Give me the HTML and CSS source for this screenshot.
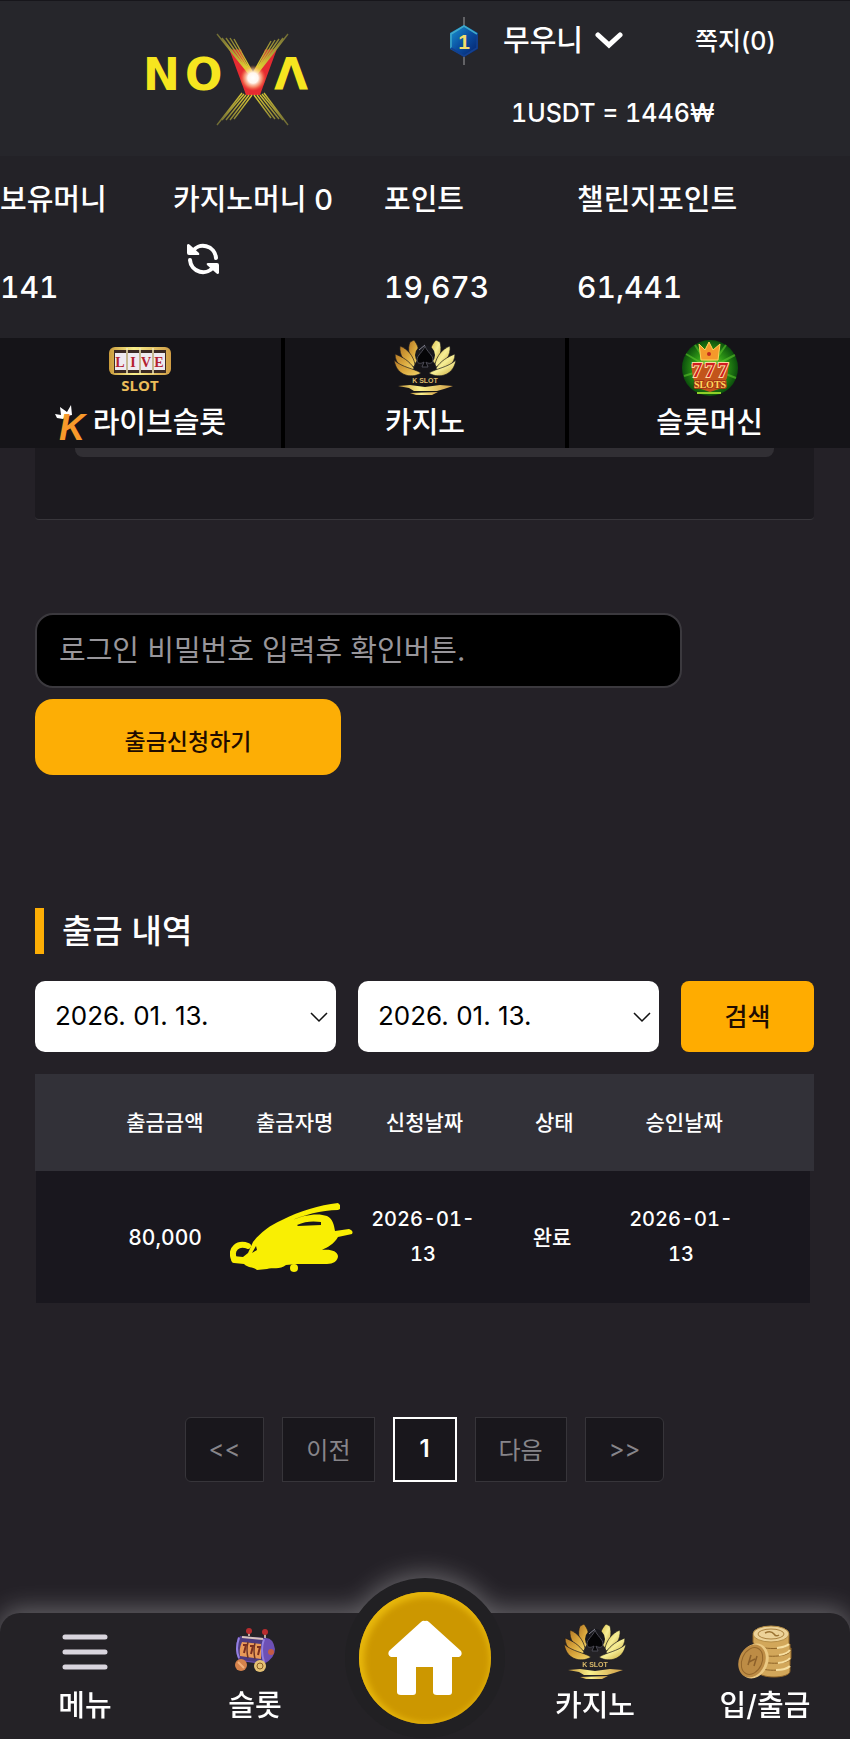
FILE: index.html
```html
<!DOCTYPE html>
<html lang="ko">
  <head>
    <meta charset="utf-8">
    <meta name="viewport" content="width=device-width, initial-scale=1">
    <title>출금 내역</title>
    <link rel="stylesheet" href="styles.css">
  </head>
  <body>
    <!-- 공용 그라디언트 / 심볼 -->
    <svg class="defs" width="0" height="0" aria-hidden="true">
      <defs>
        <linearGradient id="gold" x1="0" y1="0" x2="1" y2="1">
          <stop offset="0" stop-color="#b57a26"/>
          <stop offset=".5" stop-color="#d9a63c"/>
          <stop offset="1" stop-color="#f3d86c"/>
        </linearGradient>
        <linearGradient id="goldLight" x1="0" y1="0" x2="1" y2="1">
          <stop offset="0" stop-color="#d8b93f"/>
          <stop offset=".5" stop-color="#f6ee96"/>
          <stop offset="1" stop-color="#c3a02f"/>
        </linearGradient>
        <linearGradient id="goldBar" x1="0" y1="0" x2="1" y2="0">
          <stop offset="0" stop-color="#c99a3a"/>
          <stop offset=".4" stop-color="#f9f08c"/>
          <stop offset="1" stop-color="#d09d45"/>
        </linearGradient>
        <symbol id="lotus" viewBox="0 0 62 56">
          <g fill="url(#gold)" stroke="#1b1a1e" stroke-width=".7">
            <path d="M16 2 20 0C24 5 26 11 24 19L21 24C15 18 13 9 16 2Z"/>
            <path d="M6 6C14 9 19 16 21 24L20 27C10 23 5 15 6 6Z"/>
            <path d="M1 14C9 17 15 21 20 28L19 30C9 30 1 24 1 14Z"/>
            <path d="M0 20C9 28 19 28 27 33C20 38 3 38 0 20Z"/>
          </g>
          <g fill="url(#goldLight)" stroke="#1b1a1e" stroke-width=".7">
            <path d="M46 2 42 0C37 5 35 11 37 19L41 24C47 18 48 9 46 2Z"/>
            <path d="M56 6C48 9 43 16 41 24L42 27C52 23 57 15 56 6Z"/>
            <path d="M61 14C53 17 47 21 42 28L43 30C53 30 61 24 61 14Z"/>
            <path d="M62 20C53 28 43 28 35 33C42 38 59 38 62 20Z"/>
          </g>
          <circle cx="31" cy="15" r="10" fill="#17171c"/>
          <path d="M31 6C33 12 39 15 39 20C39 24 34 24 32 22L34 27H28L30 22C27 24 23 24 23 20C23 15 29 12 31 6Z" fill="#050507" stroke="#4b4a54"/>
          <path d="M25 10 31 5" stroke="#858592"/>
          <text class="lotus-text" x="31" y="43" text-anchor="middle">K SLOT</text>
          <path d="M4 46 16 45 31 47 46 45 59 46 50 49 43 51H20L15 48Z" fill="url(#goldBar)"/>
          <path d="M16 53 44 52 38 55H22Z" fill="url(#goldBar)"/>
        </symbol>
      </defs>
    </svg>

    <header class="top">
      <a class="logo" href="#" aria-label="NOVA">
        <svg width="180" height="94" viewBox="-4 0 180 94">
          <defs>
            <radialGradient id="flare">
              <stop offset="0" stop-color="#fff"/>
              <stop offset=".4" stop-color="#fff6ee"/>
              <stop offset=".7" stop-color="#ffc890" stop-opacity=".6"/>
              <stop offset="1" stop-color="#ff7b3a" stop-opacity="0"/>
            </radialGradient>
            <radialGradient id="ray" gradientUnits="userSpaceOnUse" cx="107" cy="46" r="56">
              <stop offset="0" stop-color="#ffe92e"/>
              <stop offset=".5" stop-color="#b9ac35"/>
              <stop offset="1" stop-color="#6f6c35"/>
            </radialGradient>
          </defs>
          <text class="logo-text" x="-3" y="57">N</text>
          <text class="logo-text" x="39" y="57">O</text>
          <text class="logo-text" x="128" y="57">Λ</text>
          <text class="logo-v" x="107" y="62" text-anchor="middle">V</text>
          <g stroke="url(#ray)" stroke-width="1.4">
            <path d="M71 1 104 42M76 5 105 42M80 5 106 42M84 5 107 42M88 6 108 42"/>
            <path d="M142 1 110 42M137 5 109 42M133 6 108 42M129 7 107 42M125 8 106 42"/>
            <path d="M71 92 96 60M76 87 98 61M80 87 100 62M84 87 103 62M88 86 106 62"/>
            <path d="M142 92 118 60M137 87 116 61M133 86 114 62M129 86 111 62M125 85 108 62"/>
          </g>
          <circle cx="107" cy="45" r="13" fill="url(#flare)"/>
        </svg>
      </a>
      <div class="account">
        <div class="account-row">
          <svg width="30" height="48" viewBox="0 0 30 48" aria-hidden="true">
            <defs>
              <linearGradient id="badge" x1="0" y1="0" x2="1" y2="1">
                <stop offset="0" stop-color="#1a9bd3"/>
                <stop offset=".5" stop-color="#0a4da0"/>
                <stop offset="1" stop-color="#051e66"/>
              </linearGradient>
            </defs>
            <path d="M15 0V48" stroke="#77777b" stroke-width="1.5"/>
            <path d="M15 8 29 16V32L15 40 1 32V16Z" fill="url(#badge)"/>
            <path d="M2 31V17L15 9 28 17" fill="none" stroke="#3fa9c9" stroke-width="1.5"/>
            <path d="M2 31 15 39 28 31V18" fill="none" stroke="#14408f" stroke-width="1.5"/>
            <text class="badge-text" x="15" y="32" text-anchor="middle">1</text>
          </svg>
          <button class="user" type="button">
            무우니
            <svg width="28" height="18" viewBox="0 0 28 18" aria-hidden="true">
              <path d="M3 3 14 13 25 3" fill="none" stroke="#fff" stroke-width="5" stroke-linecap="round"/>
            </svg>
          </button>
          <a class="memo" href="#">쪽지(0)</a>
        </div>
        <p class="rate">1USDT = 1446₩</p>
      </div>
    </header>

    <section class="money">
      <div class="money-item">
        <span class="money-label">보유머니</span>
        <span class="money-value">141</span>
      </div>
      <div class="money-item">
        <span class="money-label">카지노머니 0</span>
        <button class="refresh" type="button" aria-label="새로고침">
          <svg width="32" height="32" viewBox="0 0 32 32">
            <path d="M5 9A13 13 0 0 1 29 15" fill="none" stroke="#fff" stroke-width="4" stroke-linecap="round"/>
            <path d="M27 23A13 13 0 0 1 3 17" fill="none" stroke="#fff" stroke-width="4" stroke-linecap="round"/>
            <path d="M0 2Q1 0 3 2L12 10Q13 12 11 12H2Q0 12 0 10Z" fill="#fff"/>
            <path d="M32 30Q31 32 29 30L20 22Q19 20 21 20H30Q32 20 32 22Z" fill="#fff"/>
          </svg>
        </button>
      </div>
      <div class="money-item">
        <span class="money-label">포인트</span>
        <span class="money-value">19,673</span>
      </div>
      <div class="money-item">
        <span class="money-label">챌린지포인트</span>
        <span class="money-value">61,441</span>
      </div>
    </section>

    <nav class="tabs">
      <a class="tab" href="#">
        <svg width="64" height="56" viewBox="0 0 64 56" aria-hidden="true">
          <rect x="1" y="7" width="62" height="28" rx="6" fill="url(#goldBar)"/>
          <rect x="6" y="10" width="52" height="23" fill="#3b2a24"/>
          <g fill="#eeeaf0">
            <rect x="7" y="13" width="11" height="17"/><rect x="20" y="13" width="11" height="17"/>
            <rect x="33" y="13" width="11" height="17"/><rect x="46" y="13" width="11" height="17"/>
          </g>
          <g class="reel-text" text-anchor="middle">
            <text x="12" y="27">L</text><text x="25" y="27">I</text>
            <text x="38" y="27">V</text><text x="51" y="27">E</text>
          </g>
          <path d="M19 8V34M32 8V34M45 8V34" stroke="#f5e9b5" stroke-width="1.5"/>
          <text class="slot-text" x="32" y="51" text-anchor="middle">SLOT</text>
        </svg>
        <span class="tab-label">
          <svg class="k-logo" width="34" height="36" viewBox="0 0 34 36" aria-hidden="true">
            <path d="M2 13 0 9 6 10 5 2 12 7 16 0 17 10 12 11 8 14Z" fill="#fff"/>
            <text class="k-text" x="4" y="35">K</text>
          </svg>
          라이브슬롯
        </span>
      </a>
      <a class="tab" href="#">
        <svg width="62" height="56" aria-hidden="true"><use href="#lotus"/></svg>
        <span class="tab-label">카지노</span>
      </a>
      <a class="tab" href="#">
        <svg width="56" height="56" viewBox="0 0 56 56" aria-hidden="true">
          <defs>
            <radialGradient id="green">
              <stop offset="0" stop-color="#b4e04a"/>
              <stop offset=".55" stop-color="#2f9a16"/>
              <stop offset="1" stop-color="#0b4f0c"/>
            </radialGradient>
          </defs>
          <circle cx="28" cy="28" r="28" fill="url(#green)"/>
          <path d="M28 28 4 14M28 28 13 5M28 28 44 5M28 28 53 15M28 28 2 36M28 28 54 38" stroke="#5cc62c" stroke-width="2" opacity=".6"/>
          <path d="M19 20 17 4 23 10 27 2 31 10 38 4 36 20Z" fill="#f4992b" stroke="#ffd35a"/>
          <circle cx="27" cy="14" r="2" fill="#c32a1e"/>
          <path d="M9 24H47L45 38 40 48 28 52 16 48 11 38Z" fill="#c2541a"/>
          <g class="seven-text" text-anchor="middle">
            <text x="15" y="37">7</text><text x="28" y="37">7</text><text x="41" y="37">7</text>
          </g>
          <text class="slots-text" x="28" y="48" text-anchor="middle">SLOTS</text>
          <path d="M15 53H39" stroke="#8ed029" stroke-width="2"/>
        </svg>
        <span class="tab-label">슬롯머신</span>
      </a>
    </nav>

    <main class="content">
      <div class="panel">
        <div class="panel-card"></div>
      </div>

      <form class="withdraw">
        <input class="password" type="password" placeholder="로그인 비밀번호 입력후 확인버튼." aria-label="로그인 비밀번호">
        <button class="submit" type="button">출금신청하기</button>
      </form>

      <h2 class="title">출금 내역</h2>

      <form class="search">
        <select class="date" aria-label="시작 날짜">
          <option>2026. 01. 13.</option>
        </select>
        <select class="date" aria-label="종료 날짜">
          <option>2026. 01. 13.</option>
        </select>
        <button class="search-btn" type="button">검색</button>
      </form>

      <table class="list">
        <thead>
          <tr>
            <th>출금금액</th>
            <th>출금자명</th>
            <th>신청날짜</th>
            <th>상태</th>
            <th>승인날짜</th>
          </tr>
        </thead>
        <tbody>
          <tr>
            <td>80,000</td>
            <td class="name">
              <svg width="123" height="69" viewBox="0 0 123 69" aria-hidden="true">
                <path d="M4 56C0 46 8 39 18 43" fill="none" stroke="#f9ef03" stroke-width="6" stroke-linecap="round"/>
                <path d="M3 53 13 54 18 50 23 39C29 31 40 22 52 17C70 8 89 2 108 0L110 2V6L108 7C91 7 74 12 60 18C75 11 89 10 97 13C103 16 104 22 105 28L119 26Q124 28 122 31L108 34C104 41 98 44 92 47C101 46 107 48 108 53C108 58 103 61 97 61H67L56 62C50 67 42 64 37 66L27 67C24 64 18 65 14 61L4 60C1 60 0 55 3 53Z" fill="#f9ef03"/>
                <path d="M7 51C8 46 11 44 17 46L12 52ZM22 50 26 43 27 47ZM67 22C75 18 84 18 91 19V22L68 23Z" fill="#19171e"/>
                <circle cx="64" cy="65" r="4" fill="#f9ef03"/>
              </svg>
            </td>
            <td class="day">2026-01-13</td>
            <td>완료</td>
            <td class="day">2026-01-13</td>
          </tr>
        </tbody>
      </table>

      <div class="paging">
        <button type="button">&lt;&lt;</button>
        <button type="button">이전</button>
        <button class="on" type="button">1</button>
        <button type="button">다음</button>
        <button type="button">&gt;&gt;</button>
      </div>
    </main>

    <nav class="bottom">
      <a class="bottom-item" href="#">
        <svg width="56" height="56" viewBox="0 0 56 56" aria-hidden="true">
          <path d="M8 13H48M8 28H48M8 43H48" stroke="#d9d5dd" stroke-width="5" stroke-linecap="round"/>
        </svg>
        <span>메뉴</span>
      </a>
      <a class="bottom-item" href="#">
        <svg width="56" height="56" viewBox="5 0 56 56" aria-hidden="true">
          <path d="M27 12V7M43 14V8" stroke="#b9a6a0" stroke-width="2"/>
          <circle cx="27" cy="7" r="3" fill="#b82d2f"/><circle cx="43" cy="8" r="3" fill="#b82d2f"/>
          <path d="M16 13Q12 25 17 37L42 40Q53 34 53 25Q51 13 43 14Z" fill="#6d50b5"/>
          <path d="M18 12 43 14Q39 18 40 26Q39 34 42 39L18 36Q13 24 18 12Z" fill="#4d3b7f"/>
          <path d="M20 18 39 20V35L18 32Q17 24 20 18Z" fill="#e99a58"/>
          <path d="M26 18Q24 25 26 34M33 19Q31 26 33 35" fill="none" stroke="#6c3427" stroke-width="1.5"/>
          <path d="M21 21H24L22 29M28 22H31L29 30M35 23H38L36 31" fill="none" stroke="#7a2f20" stroke-width="2"/>
          <path d="M20 13 41 15" stroke="#d8c3bd" stroke-width="2"/>
          <path d="M17 14Q13 25 17 34M42 15Q38 26 42 38" fill="none" stroke="#9380e0" stroke-width="2"/>
          <circle cx="49" cy="28" r="3" fill="#c35b45"/>
          <circle cx="19" cy="41" r="6" fill="#d5824b"/><circle cx="38" cy="42" r="6" fill="#e5c174"/>
          <circle cx="38" cy="42" r="3" fill="none" stroke="#8b5d24"/>
          <path d="M16 38 22 44" stroke="#f2b07a" stroke-width="2"/>
        </svg>
        <span>슬롯</span>
      </a>
      <a class="bottom-item home" href="#" aria-label="홈">
        <span class="home-ring">
          <span class="home-coin">
            <svg width="76" height="76" viewBox="0 0 76 76">
              <path d="M38 1Q40 0 42 2L74 31Q76 35 72 37H65V72Q65 75 62 75H50Q46 75 46 72V47H29V72Q29 75 26 75H14Q10 75 10 72V37H4Q0 35 2 31L34 2Q36 0 38 1Z" fill="#fff"/>
            </svg>
          </span>
        </span>
      </a>
      <a class="bottom-item" href="#">
        <svg width="62" height="56" aria-hidden="true"><use href="#lotus"/></svg>
        <span>카지노</span>
      </a>
      <a class="bottom-item" href="#">
        <svg width="56" height="56" viewBox="0 0 56 56" aria-hidden="true">
          <g fill="#d2a75a" stroke="#8e6428">
            <path d="M21 42V47C21 55 53 55 53 47V42Z"/>
            <path d="M20 36V41C21 48 52 48 53 41V35Z"/>
            <path d="M21 29V34C22 41 53 41 54 34V24Z"/>
            <path d="M18 21V27C19 34 52 34 53 27V20Z"/>
            <path d="M16 11V18C17 26 52 27 52 19V11Z"/>
          </g>
          <path d="M40 24Q49 23 52 20M42 31Q50 30 53 26M41 39Q50 38 53 34M39 46Q49 46 53 42" fill="none" stroke="#f7dfa0" stroke-width="2"/>
          <ellipse cx="34" cy="10" rx="18" ry="8" fill="#ecd298" stroke="#b58d45"/>
          <ellipse cx="34" cy="10" rx="13" ry="5" fill="none" stroke="#ab8340"/>
          <path d="M28 9Q34 6 37 10Q39 13 42 11" fill="none" stroke="#9c7433" stroke-width="1.5"/>
          <ellipse cx="17" cy="37" rx="14" ry="18" transform="rotate(24 17 37)" fill="#ebc983"/>
          <ellipse cx="15" cy="37" rx="13" ry="17" transform="rotate(24 15 37)" fill="#bd8c45"/>
          <ellipse cx="15" cy="37" rx="10" ry="14" transform="rotate(24 15 37)" fill="none" stroke="#94672c"/>
          <path d="M11 41 14 31M17 42 20 32M12 38 18 35" stroke="#8c602a" stroke-width="1.5"/>
        </svg>
        <span>입/출금</span>
      </a>
    </nav>
  </body>
</html>
```
FILE: styles.css
```css
*{
  box-sizing: border-box;
}
body{
  margin: 0;
  background: #242127;
  color: #fff;
  font-family: Inter, "Noto Sans CJK KR", sans-serif;
  font-size: 29px;
  line-height: 36px;
}
a{
  color: inherit;
  text-decoration: none;
}
button, input, select{
  margin: 0;
  font-family: inherit;
}
button{
  border: 0;
  padding: 0;
  color: inherit;
  cursor: pointer;
}
svg{
  display: block;
  flex: none;
}
.defs{
  position: absolute;
}

/**** 상단 ****/
.top{
  display: grid;
  grid-template-columns: 1fr 1fr;
  height: 156px;
  border-top: 1px solid #17161b;
  background: #26262b;
  font-weight: 500;
}
.logo{
  display: flex;
  justify-content: center;
  padding: 32px 0 0 38px;
}
.logo-text{
  fill: #f6e51f;
  font: bold 44px "DejaVu Sans", sans-serif;
}
.logo-v{
  fill: #e52b31;
  font: bold 62px "DejaVu Sans", sans-serif;
}
.account{
  padding: 16px 0 0 24px;
}
.account-row{
  display: flex;
  align-items: center;
}
.badge-text{
  fill: #f3dc6b;
  font: bold 21px "Liberation Sans", sans-serif;
}
.user{
  display: flex;
  align-items: center;
  gap: 12px;
  margin-left: 24px;
  background: none;
  font-size: 29px;
  font-weight: 500;
  line-height: 36px;
}
.memo{
  margin-left: 72px;
  font-size: 25px;
}
.rate{
  margin: 30px 0 0;
  padding-left: 62px;
  font-size: 25px;
  font-variant-numeric: tabular-nums;
}

/**** 보유머니 ****/
.money{
  display: grid;
  grid-template-columns: 173fr 211fr 193fr 273fr;
  height: 182px;
  padding-top: 26px;
  background: #232227;
  font-weight: 500;
}
.money-item{
  display: flex;
  flex-direction: column;
  align-items: flex-start;
}
.money-value{
  margin-top: 51px;
  font-size: 30px;
  font-variant-numeric: tabular-nums;
}
.refresh{
  margin: 25px 0 0 14px;
  background: none;
}

/**** 게임 탭 ****/
.tabs{
  display: grid;
  grid-template-columns: repeat(3, 1fr);
  gap: 4px;
  background: #000;
  font-weight: 500;
}
.tab{
  display: flex;
  flex-direction: column;
  align-items: center;
  gap: 9px;
  height: 110px;
  padding-top: 2px;
  background: #151418;
}
.tab-label{
  display: flex;
  gap: 4px;
}
.lotus-text{
  fill: #d9b96a;
  font: bold 7px "Liberation Sans", sans-serif;
}
.reel-text{
  fill: #b3202f;
  font: bold 14px "Liberation Serif", serif;
}
.slot-text{
  fill: #ecbd5a;
  font: bold 15px "Open Sans", sans-serif;
}
.k-logo{
  overflow: visible;
}
.k-text{
  fill: #f7992a;
  font: italic bold 36px "Liberation Sans", sans-serif;
}
.seven-text{
  fill: #d11d20;
  stroke: #ffd9a0;
  stroke-width: 2px;
  paint-order: stroke;
  font: bold 22px "Liberation Serif", serif;
}
.slots-text{
  fill: #ffd75a;
  stroke: #a53516;
  stroke-width: 2px;
  paint-order: stroke;
  font: bold 10px "Liberation Serif", serif;
}

/**** 본문 ****/
.content{
  padding: 0 36px 0 35px;
}
.panel{
  height: 72px;
  padding: 0 40px;
  border-bottom: 1px solid #38363b;
  border-radius: 0 0 4px 4px;
  background: #1c1a1f;
}
.panel-card{
  height: 9px;
  border-radius: 0 0 8px 8px;
  background: #312f34;
}
.withdraw{
  display: flex;
  flex-direction: column;
  align-items: flex-start;
  gap: 11px;
  margin-top: 93px;
}
.password{
  width: 83%;
  height: 75px;
  padding: 0 22px;
  border: 2px solid #3b393e;
  border-radius: 18px;
  background: #000;
  color: #fff;
  font-size: 29px;
}
.password::placeholder{
  color: #98969b;
}
.submit{
  width: 306px;
  height: 76px;
  padding-top: 6px;
  border-radius: 18px;
  background: #fdae05;
  color: #1f0c00;
  font-size: 23px;
  font-weight: 500;
}
.title{
  margin: 133px 0 27px;
  padding-left: 18px;
  border-left: 9px solid #fdae05;
  font-size: 33px;
  font-weight: 500;
  line-height: 46px;
}
.search{
  display: grid;
  grid-template-columns: 301fr 301fr 133fr;
  gap: 22px;
}
.date{
  height: 71px;
  padding: 0 20px 2px;
  border: 0;
  border-radius: 10px;
  background: #fff url("data:image/svg+xml,%3Csvg xmlns='http://www.w3.org/2000/svg' width='20' height='12'%3E%3Cpath d='M2 2l8 8 8-8' fill='none' stroke='%23111' stroke-width='1.5'/%3E%3C/svg%3E") no-repeat right 7px center;
  color: #000;
  font-size: 26px;
  appearance: none;
}
.search-btn{
  padding-bottom: 4px;
  border-radius: 8px;
  background: #ffac00;
  color: #1f0c00;
  font-size: 25px;
  font-weight: 500;
}

/**** 출금 내역 표 ****/
.list{
  display: block;
  margin-top: 22px;
  font-size: 21px;
  font-variant-numeric: tabular-nums;
  line-height: 35px;
}
.list thead, .list tbody{
  display: block;
}
.list tr{
  display: flex;
  align-items: center;
  justify-content: center;
}
.list thead tr{
  height: 97px;
  background: #323138;
}
.list tbody tr{
  height: 132px;
  margin: 0 4px 0 1px;
  background: #19171e;
}
.list th, .list td{
  flex: none;
  width: calc(100% / 6);
  padding: 0 10px;
  font-weight: 500;
  text-align: center;
}
.list .name{
  padding: 0;
}
.list .day{
  font-size: 20px;
}

/**** 페이징 ****/
.paging{
  display: flex;
  justify-content: center;
  gap: 18px;
  margin: 114px 0 131px;
}
.paging button{
  min-width: 64px;
  height: 65px;
  padding: 0 23px 2px;
  border: 1px solid #37353a;
  background: #19171c;
  color: #87858a;
  font-size: 24px;
}
.paging button:first-child{
  border-radius: 6px 0 0 6px;
}
.paging button:last-child{
  border-radius: 0 6px 6px 0;
}
.paging .on{
  border: 2px solid #fff;
  color: #fff;
  font-weight: 600;
}

/**** 하단 메뉴 ****/
.bottom{
  display: grid;
  grid-template-columns: repeat(5, 1fr);
  height: 126px;
  border-radius: 20px 20px 0 0;
  background: #242226;
  filter: drop-shadow(0 -4px 12px rgba(255, 255, 255, .3));
}
.bottom-item{
  display: flex;
  flex-direction: column;
  align-items: center;
  gap: 8px;
  padding-top: 11px;
  font-weight: 500;
}
.home{
  padding: 0;
}
.home-ring{
  display: flex;
  align-items: center;
  justify-content: center;
  width: 160px;
  height: 160px;
  margin-top: -35px;
  border-radius: 50%;
  background: #212023;
}
.home-coin{
  display: flex;
  align-items: center;
  justify-content: center;
  width: 132px;
  height: 132px;
  border-radius: 50%;
  background: #cc9700;
  box-shadow: inset 2px 2px 6px 3px #e8b80c;
}
```
